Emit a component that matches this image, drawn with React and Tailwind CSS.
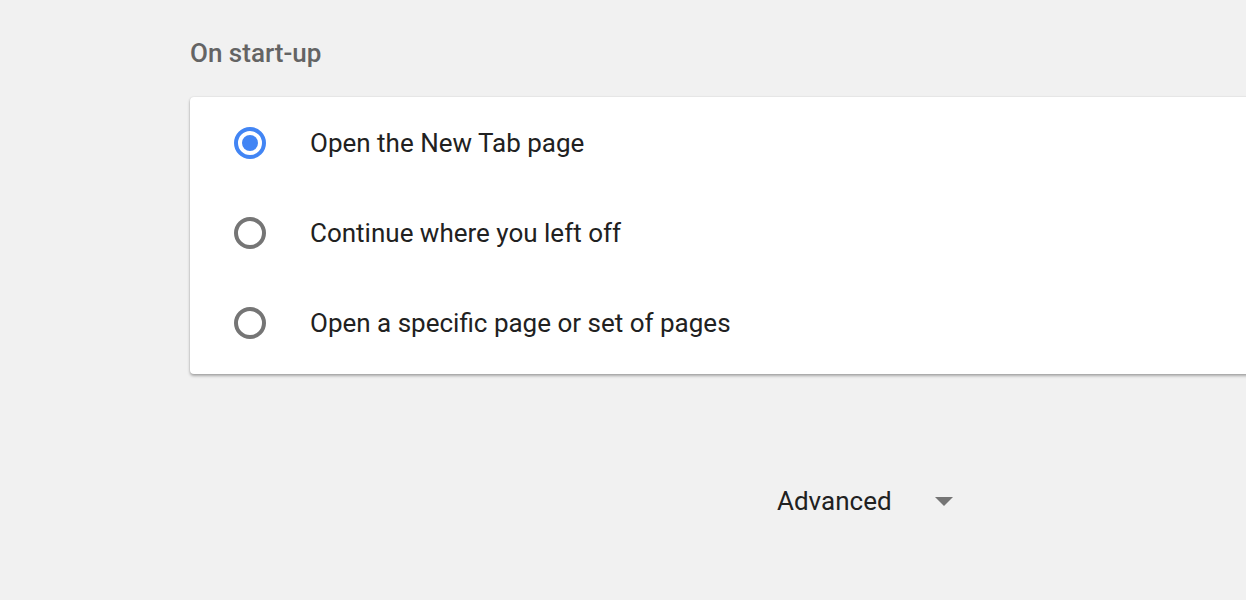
import React, { useState } from 'react';

const options = ["Open the New Tab page", "Continue where you left off", "Open a specific page or set of pages"];

const Radio = ({ checked }) => (
  <div
    className={
      "w-[32px] h-[32px] rounded-full border-[4px] flex items-center justify-center shrink-0 " +
      (checked ? "border-[#4285f4]" : "border-[#757575]")
    }
  >
    {checked && <div className="w-[16px] h-[16px] rounded-full bg-[#4285f4]" />}
  </div>
);

const App = () => {
  const [selected, setSelected] = useState(0);

  return (
    <div className="w-[1246px] h-[600px] overflow-hidden bg-[#f1f1f1] font-['Roboto',sans-serif]">
      <div className="pl-[190px] pt-[35px]">
        <h2 className="text-[26px] leading-[36px] font-medium text-[#646464] h-[36px]">On start-up</h2>
        <div className="mt-[26px] w-[1100px] bg-white rounded-[4px] shadow-[0_2px_3px_rgba(0,0,0,0.3),0_0_2px_rgba(0,0,0,0.12)] pt-[1px] pb-[6px]">
          {options.map((o, i) => (
            <div
              key={o}
              onClick={() => setSelected(i)}
              className="h-[90px] flex items-center pl-[44px] cursor-pointer"
            >
              <Radio checked={selected === i} />
              <span className="ml-[44px] text-[26px] text-[#212121]">{o}</span>
            </div>
          ))}
        </div>
      </div>
      <div className="flex items-center pl-[777px] mt-[109px] h-[36px]">
        <span className="text-[26px] text-[#212121]">Advanced</span>
        <svg className="ml-[43px]" width="18" height="9" viewBox="0 0 18 9">
          <path d="M0 0 L18 0 L9 9 Z" fill="#757575" />
        </svg>
      </div>
    </div>
  );
};

export default App;
